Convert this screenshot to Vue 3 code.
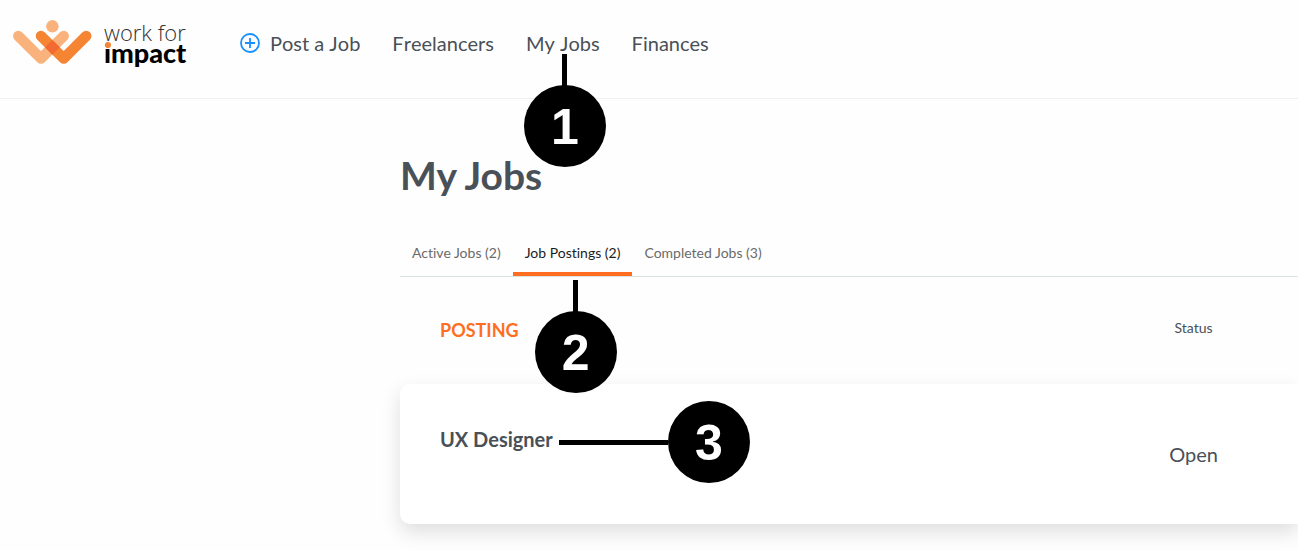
<script setup>
const tabs = [
  { label: 'Active Jobs', count: 2 },
  { label: 'Job Postings', count: 2, active: true, step: 2 },
  { label: 'Completed Jobs', count: 3 },
]
const postings = [{ title: 'UX Designer', status: 'Open', step: 3 }]
</script>

<template>
  <div class="page">
    <header class="topbar">
      <a href="#" class="brand" aria-label="Work for Impact">
        <svg class="mark" width="80" height="46" viewBox="0 0 80 46" aria-hidden="true">
          <g fill="none" stroke-width="10.500" stroke-linecap="round" stroke-linejoin="round">
            <path d="M6.300 17L29 39.500L51.700 17" stroke="#f9b27c" />
            <path d="M29 17L51.700 39.500L74.200 17" stroke="#f58433" />
          </g>
          <path d="M40.400 20.900L47.900 28.300L40.400 35.700L32.900 28.300Z" fill="#f26a31" />
          <circle cx="40.400" cy="7.300" r="6.200" fill="#f9b27c" />
        </svg>
        <span class="wordmark">
          <span class="word-top">work for</span>
          <span class="word-bottom">impact</span>
        </span>
      </a>
      <nav class="nav">
        <a href="#" class="nav-link">
          <svg class="plus" width="20" height="20" viewBox="0 0 20 20" fill="none" stroke="#1890ff" stroke-width="1.800" aria-hidden="true">
            <circle cx="10" cy="10" r="9" />
            <path d="M10 5V15M5 10H15" />
          </svg>
          Post a Job
        </a>
        <a href="#" class="nav-link">Freelancers</a>
        <a href="#" class="nav-link">My Jobs<span class="callout below nav-callout"><b>1</b></span></a>
        <a href="#" class="nav-link">Finances</a>
      </nav>
    </header>

    <main class="content">
      <h1>My Jobs</h1>
      <div class="tabs" role="tablist">
        <button
          v-for="tab in tabs"
          :key="tab.label"
          type="button"
          role="tab"
          class="tab"
          :class="{ active: tab.active }"
          :aria-selected="!!tab.active"
        >
          {{ tab.label }} ({{ tab.count }})
          <span v-if="tab.step" class="callout below tab-callout"><b>{{ tab.step }}</b></span>
        </button>
      </div>

      <table class="postings">
        <thead>
          <tr>
            <th class="heading">POSTING</th>
            <th class="status-heading">Status</th>
          </tr>
        </thead>
        <tbody>
          <tr v-for="job in postings" :key="job.title">
            <td class="job">
              <a href="#" class="job-link">{{ job.title }}<span class="callout beside"><b>{{ job.step }}</b></span></a>
            </td>
            <td class="status">{{ job.status }}</td>
          </tr>
        </tbody>
      </table>
    </main>
  </div>
</template>

<style>
body {
  background: #fefefe;
}
</style>

<style scoped>
.page {
  overflow: hidden;
  font-family: Lato, "Liberation Sans", sans-serif;
  font-variant-ligatures: none;
  color: #495057;
}
a {
  color: inherit;
  text-decoration: none;
}
.topbar {
  display: flex;
  align-items: center;
  gap: 50px;
  padding: 17px 12px 19px;
  border-bottom: 1px solid #f0f0f0;
}
.brand {
  display: flex;
  align-items: center;
  gap: 12px;
  width: 178px;
  height: 50px;
  margin-bottom: 12px;
}
.mark {
  flex: none;
}
.wordmark {
  display: flex;
  flex-direction: column;
  white-space: nowrap;
  color: #000;
}
.word-top {
  font: 300 22px/22px "Open Sans", sans-serif;
  color: #333;
}
.word-bottom {
  position: relative;
  font: 900 27px/20px Lato, sans-serif;
}
.word-bottom::before {
  content: "";
  position: absolute;
  top: -1px;
  left: 1px;
  width: 6px;
  height: 6px;
  border-radius: 50%;
  background: #f58433;
}
.nav {
  display: flex;
  gap: 32px;
  margin-bottom: 10px;
  font-kerning: none;
}
.nav-link {
  position: relative;
  display: flex;
  align-items: center;
  gap: 10px;
  font-size: 20px;
  line-height: 24px;
  white-space: nowrap;
}
.content {
  margin-left: 400px;
  padding: 52px 0 26px;
}
h1 {
  margin: 0;
  font-size: 39px;
  line-height: 48px;
  font-weight: 700;
}
.tabs {
  display: flex;
  margin-top: 31px;
  border-bottom: 1px solid #dbe3e3;
}
.tab {
  position: relative;
  padding: 13px 12px 9px;
  border: 0;
  border-bottom: 4px solid transparent;
  background: none;
  font: 400 14px/20px Lato, sans-serif;
  font-variant-ligatures: none;
  color: #6a6a6a;
}
.tab.active {
  color: #1c1c1c;
  border-bottom-color: #ff6d20;
}
.postings {
  display: block;
}
thead,
tbody {
  display: block;
}
tr {
  display: grid;
  grid-template-columns: 1fr 209px;
}
th {
  padding: 0;
}
thead tr {
  height: 107px;
}
.heading {
  padding: 41px 0 0 40px;
  text-align: left;
  font-size: 18px;
  line-height: 24px;
  font-weight: 700;
  color: #ff6d20;
}
.status-heading {
  padding-top: 39px;
  font-size: 14px;
  line-height: 24px;
  font-weight: 400;
}
tbody tr {
  min-height: 140px;
  border-radius: 10px 0 0 10px;
  background: #fff;
  box-shadow: 0 8px 20px rgba(0, 0, 0, 0.13);
}
td {
  padding: 0;
  font-size: 20px;
  line-height: 24px;
}
.job {
  padding: 43px 0 0 40px;
  font-weight: 700;
}
.job-link {
  position: relative;
  display: inline-block;
}
.status {
  align-self: center;
  text-align: center;
}
.callout {
  position: absolute;
  z-index: 1;
  display: flex;
  align-items: center;
  pointer-events: none;
}
.callout::before {
  content: "";
  background: #000;
}
.callout b {
  width: 82px;
  height: 82px;
  border-radius: 50%;
  background: #000;
  color: #fff;
  font: 700 50px/84px "Liberation Sans", Arial, sans-serif;
  text-align: center;
}
.below {
  flex-direction: column;
}
.below::before {
  width: 5px;
  height: 32px;
}
.nav-callout {
  top: 23px;
  left: -2px;
}
.tab-callout {
  top: 50px;
  left: 22px;
}
.below b {
  margin-top: -1px;
}
.beside {
  left: 119px;
  top: -26px;
}
.beside::before {
  width: 109px;
  height: 5px;
}
</style>
